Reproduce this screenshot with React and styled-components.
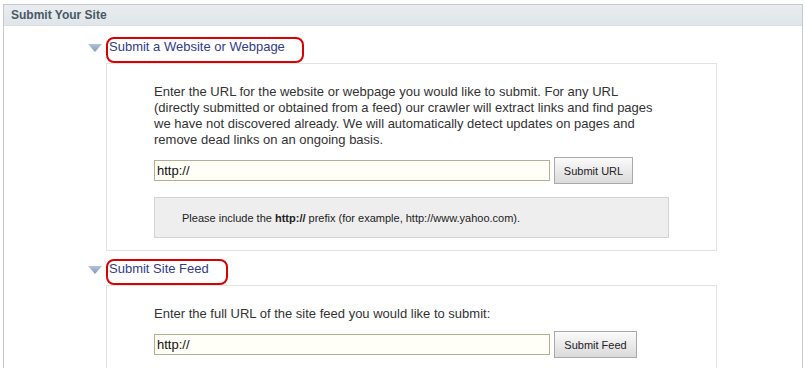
import React from "react";
import styled, { createGlobalStyle } from "styled-components";

const Global = createGlobalStyle`
  html, body { margin: 0; padding: 0; background: #fff; }
  body { font-family: "Liberation Sans", Arial, sans-serif; }
`;

const Panel = styled.div`
  margin: 4px 0 0 3px;
  width: 800px;
  height: 364px;
  box-sizing: border-box;
  border: 1px solid #c4c9cd;
  border-bottom: none;
  overflow: hidden;
`;

const Header = styled.div`
  height: 20px;
  display: flex;
  align-items: center;
  padding-left: 7px;
  background: linear-gradient(#e9edf0, #dfe5e9);
  border-bottom: 1px solid #d8dee2;
  font-size: 12px;
  font-weight: bold;
  color: #4a5864;
`;

const Body = styled.div`
  padding: 11px 0 0 84px;
`;

const Section = styled.div`
  margin-top: ${(p) => (p.$first ? "0" : "8px")};
`;

const HeadingRow = styled.div`
  display: flex;
  align-items: flex-start;
`;

const Arrow = styled.svg`
  margin: 7px 4px 0 0;
  flex: none;
`;

const Marked = styled.a`
  display: block;
  border: 2px solid #d90000;
  border-radius: 8px;
  padding: 0 17px 7px 1px;
  font-size: 13px;
  line-height: 15px;
  color: #313c8a;
  text-decoration: none;
  cursor: pointer;
`;

const Box = styled.div`
  margin-left: 18px;
  width: 611px;
  box-sizing: border-box;
  border: 1px solid #e3e3e3;
  border-bottom-color: ${(p) => (p.$open ? "transparent" : "#e3e3e3")};
  padding: 20px 0 12px 47px;
`;

const Text = styled.p`
  margin: 0 0 9px;
  font-size: 13px;
  line-height: 16px;
  color: #333;
`;

const FormRow = styled.div`
  display: flex;
  align-items: center;
  height: 27px;
`;

const UrlInput = styled.input`
  width: 396px;
  height: 21px;
  box-sizing: border-box;
  border: 1px solid #b0b393;
  background: #fffff7;
  padding: 0 2px;
  font-family: "Liberation Sans", Arial, sans-serif;
  font-size: 13px;
  color: #111;
  outline: none;
`;

const Button = styled.button`
  margin-left: 4px;
  width: ${(p) => p.$w}px;
  height: 27px;
  box-sizing: border-box;
  border: 1px solid #a9a9a9;
  background: linear-gradient(#fbfbfb, #dadada);
  font-family: "Liberation Sans", Arial, sans-serif;
  font-size: 11px;
  color: #222;
  padding: 0;
`;

const Note = styled.div`
  margin-top: 13px;
  width: 515px;
  height: 41px;
  box-sizing: border-box;
  border: 1px solid #d4d4d4;
  background: #eeeeee;
  display: flex;
  align-items: center;
  padding-left: 27px;
  font-size: 11px;
  color: #222;
`;

const Triangle = () => (
  <Arrow width="14" height="8" viewBox="0 0 14 8">
    <defs>
      <linearGradient id="tg" x1="0" y1="0" x2="0" y2="1">
        <stop offset="0" stopColor="#b4c4d8" />
        <stop offset="1" stopColor="#7f98b8" />
      </linearGradient>
    </defs>
    <path d="M0 0 L14 0 L7 8 Z" fill="url(#tg)" />
  </Arrow>
);

export default function App() {
  return (
    <>
      <Global />
      <Panel>
        <Header>Submit Your Site</Header>
        <Body>
          <Section $first>
            <HeadingRow>
              <Triangle />
              <Marked>Submit a Website or Webpage</Marked>
            </HeadingRow>
            <Box>
              <Text>
                Enter the URL for the website or webpage you would like to submit. For any URL
                <br />
                (directly submitted or obtained from a feed) our crawler will extract links and find pages
                <br />
                we have not discovered already. We will automatically detect updates on pages and
                <br />
                remove dead links on an ongoing basis.
              </Text>
              <FormRow>
                <UrlInput defaultValue="http://" />
                <Button $w={79}>Submit URL</Button>
              </FormRow>
              <Note>
                <span>
                  Please include the <b>http://</b> prefix (for example, http://www.yahoo.com).
                </span>
              </Note>
            </Box>
          </Section>
          <Section>
            <HeadingRow>
              <Triangle />
              <Marked>Submit Site Feed</Marked>
            </HeadingRow>
            <Box $open>
              <Text>Enter the full URL of the site feed you would like to submit:</Text>
              <FormRow>
                <UrlInput defaultValue="http://" />
                <Button $w={83}>Submit Feed</Button>
              </FormRow>
            </Box>
          </Section>
        </Body>
      </Panel>
    </>
  );
}
